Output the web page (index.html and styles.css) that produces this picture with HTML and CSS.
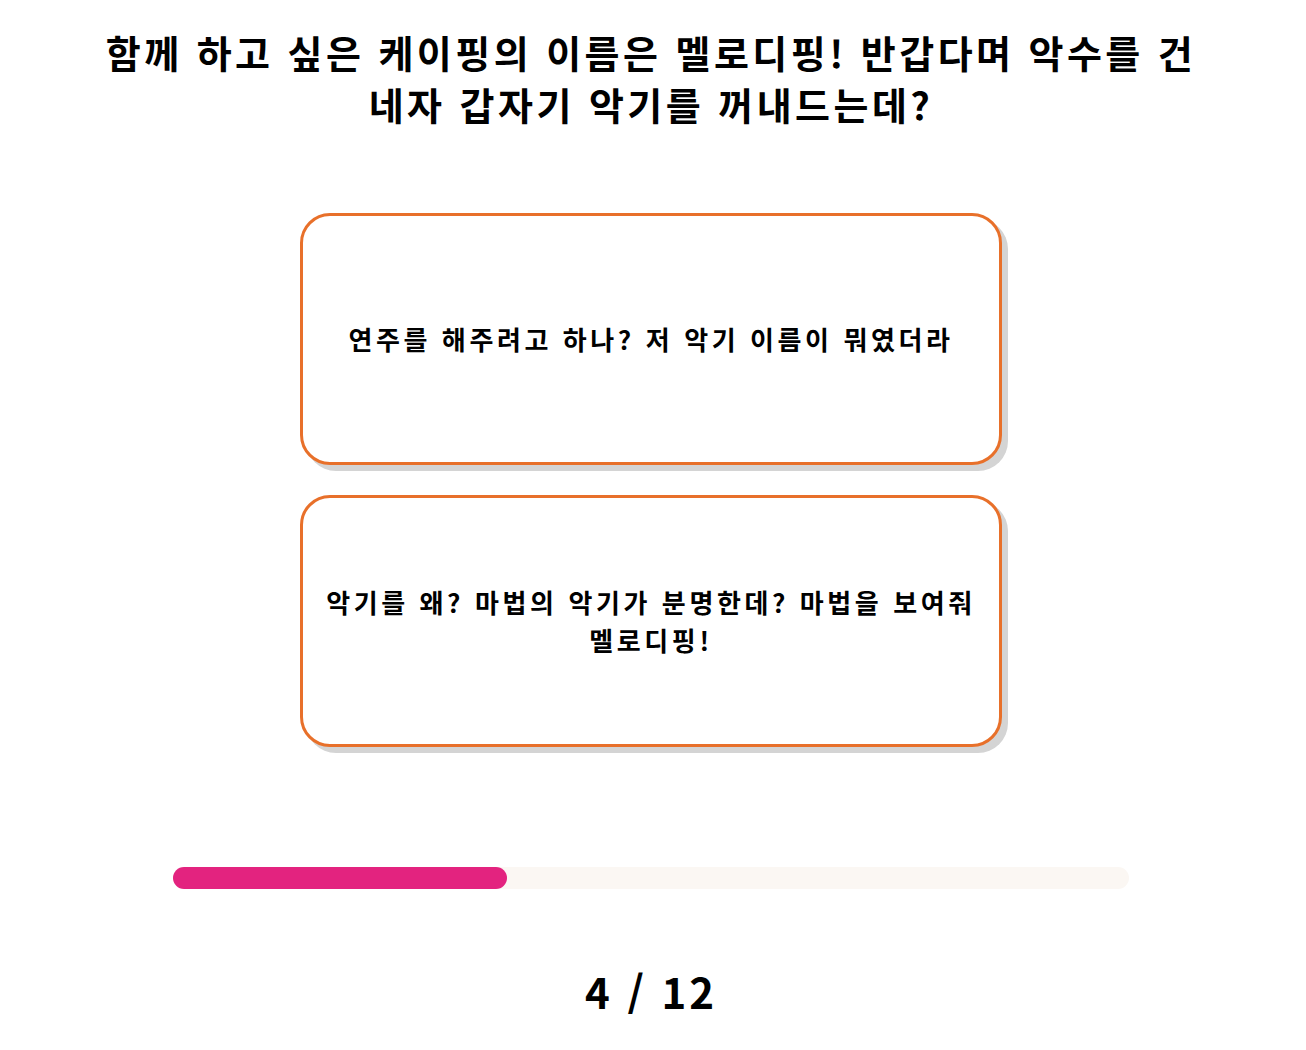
FILE: index.html
```html
<!DOCTYPE html>
<html lang="ko">
<head>
<meta charset="utf-8">
<link rel="stylesheet" href="styles.css">
</head>
<body>
<main class="page">
  <h1 class="question">함께 하고 싶은 케이핑의 이름은 멜로디핑! 반갑다며 악수를 건네자 갑자기 악기를 꺼내드는데?</h1>
  <div class="answers">
    <button class="answer">연주를 해주려고 하나? 저 악기 이름이 뭐였더라</button>
    <button class="answer">악기를 왜? 마법의 악기가 분명한데? 마법을 보여줘 멜로디핑!</button>
  </div>
  <div class="progress"><div class="progress-fill" style="width:34.94%"></div></div>
  <div class="counter">4 / 12</div>
</main>
</body>
</html>
```
FILE: styles.css
```css
html, body {
  margin: 0;
  padding: 0;
  background: #ffffff;
}
body {
  font-family: "Noto Sans CJK KR", "Noto Sans", sans-serif;
  color: #000;
}
.page {
  display: flex;
  flex-direction: column;
  align-items: center;
  padding-top: 26px;
  padding-right: 4px;
}
.question {
  margin: 0;
  width: 1100px;
  text-align: center;
  font-size: 38px;
  font-weight: 700;
  line-height: 52px;
  letter-spacing: 3.45px;
}
.answers {
  margin-top: 83px;
  display: flex;
  flex-direction: column;
  gap: 30px;
}
.answer {
  width: 702px;
  height: 252px;
  box-sizing: border-box;
  border: 3px solid #e8702a;
  border-radius: 30px;
  background: #fff;
  box-shadow: 6px 6px 0 #d4d4d4;
  font-family: inherit;
  font-size: 26px;
  font-weight: 700;
  letter-spacing: 3.6px;
  line-height: 38px;
  color: #000;
  padding: 0 20px;
  word-break: keep-all;
}
.progress {
  margin-top: 120px;
  width: 956px;
  height: 22px;
  border-radius: 11px;
  background: #fbf7f3;
}
.progress-fill {
  height: 100%;
  border-radius: 11px;
  background: #e3237f;
}
.counter {
  margin-top: 71px;
  font-size: 42px;
  font-weight: 700;
  letter-spacing: 3px;
}
```
